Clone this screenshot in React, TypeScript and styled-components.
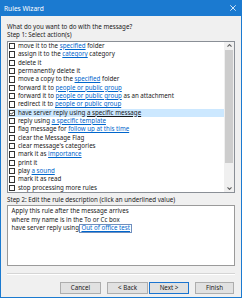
import React from 'react';
import styled, { createGlobalStyle } from 'styled-components';

const GlobalStyle = createGlobalStyle`
  html, body {
    margin: 0;
    padding: 0;
    background: #ffffff;
  }
  body {
    font-family: "Noto Sans", "Liberation Sans", sans-serif;
    color: #1a1a1a;
  }
`;

const Window = styled.div`
  width: 242px;
  height: 298px;
  box-sizing: border-box;
  border: 1px solid #1b7ad0;
  border-top: none;
  background: #f0f0f0;
  display: flex;
  flex-direction: column;
`;

const TitleBar = styled.div`
  height: 16px;
  margin: 0 -1px;
  padding: 0 6px 0 4px;
  background: #1b7ad0;
  color: #ffffff;
  display: flex;
  align-items: center;
  justify-content: space-between;
  font-size: 6.6px;
`;

const Body = styled.div`
  flex: 1;
  display: flex;
  flex-direction: column;
  padding: 6.8px 6px 0 6px;
  font-size: 6.2px;
  line-height: 8.35px;
`;

const Label = styled.div<{ $gap?: number }>`
  margin-top: ${(p) => p.$gap ?? 0}px;
  white-space: nowrap;
`;

const ListBox = styled.div`
  margin-top: 1.4px;
  height: 152.3px;
  box-sizing: border-box;
  border: 1px solid #8a8f96;
  background: #ffffff;
  display: flex;
`;

const Rows = styled.div`
  flex: 1;
  display: flex;
  flex-direction: column;
`;

const Row = styled.div<{ $selected?: boolean }>`
  height: 8.35px;
  display: flex;
  align-items: center;
  padding-left: 1px;
  white-space: nowrap;
  background: ${(p) => (p.$selected ? '#cce8ff' : 'transparent')};
`;

const Check = styled.span<{ $checked?: boolean }>`
  width: 6.3px;
  height: 6.3px;
  box-sizing: border-box;
  border: 1px solid #333333;
  background: #ffffff;
  margin-right: 2.6px;
  flex: none;
  display: flex;
  align-items: center;
  justify-content: center;
`;

const Link = styled.span<{ $dark?: boolean }>`
  color: ${(p) => (p.$dark ? '#1a1a1a' : '#0066cc')};
  text-decoration: underline;
  text-underline-offset: 1px;
`;

const ScrollBar = styled.div`
  width: 10px;
  background: #f0f0f0;
  display: flex;
  flex-direction: column;
`;

const ScrollArrow = styled.div`
  height: 8px;
  display: flex;
  align-items: center;
  justify-content: center;
`;

const Thumb = styled.div`
  height: 113px;
  margin: 0 1px;
  background: #cdcdcd;
`;

const Spacer = styled.div`
  flex: 1;
`;

const DescBox = styled.div`
  margin-top: 0.8px;
  height: 61px;
  box-sizing: border-box;
  border: 1px solid #9a9a9a;
  background: #ffffff;
  padding: 1.6px 3.5px;
`;

const DescLine = styled.div`
  white-space: nowrap;
  display: flex;
  align-items: center;
`;

const ValueLink = styled.span`
  color: #0066cc;
  text-decoration: underline;
  text-underline-offset: 1px;
  border: 1px solid #6f8fbf;
  line-height: 6.4px;
  padding: 0 1px;
  margin-left: 0.5px;
`;

const Separator = styled.div`
  margin-top: 6.7px;
  border-top: 1px solid #d5d5d5;
  border-bottom: 1px solid #ffffff;
`;

const ButtonRow = styled.div`
  margin-top: 7.5px;
  display: flex;
  justify-content: flex-end;
  padding-right: 1px;
`;

const Button = styled.div<{ $default?: boolean; $gap?: number; $width?: number }>`
  width: ${(p) => p.$width ?? 41}px;
  height: 11.5px;
  margin-left: ${(p) => p.$gap ?? 0}px;
  box-sizing: border-box;
  background: #e1e1e1;
  border: 1px solid ${(p) => (p.$default ? '#1b74cf' : '#adadad')};
  display: flex;
  align-items: center;
  justify-content: center;
  font-size: 6.2px;
`;

const Chevron = ({ up }: { up?: boolean }) => (
  <svg width="5" height="3" viewBox="0 0 5 3">
    <path
      d={up ? 'M0.5 2.6 L2.5 0.6 L4.5 2.6' : 'M0.5 0.4 L2.5 2.4 L4.5 0.4'}
      stroke="#606060"
      strokeWidth="1.1"
      fill="none"
    />
  </svg>
);

type Part = string | { link: string };

const actions: Part[][] = [
  ['move it to the ', { link: 'specified' }, ' folder'],
  ['assign it to the ', { link: 'category' }, ' category'],
  ['delete it'],
  ['permanently delete it'],
  ['move a copy to the ', { link: 'specified' }, ' folder'],
  ['forward it to ', { link: 'people or public group' }],
  ['forward it to ', { link: 'people or public group' }, ' as an attachment'],
  ['redirect it to ', { link: 'people or public group' }],
  ['have server reply using ', { link: 'a specific message' }],
  ['reply using ', { link: 'a specific template' }],
  ['flag message for ', { link: 'follow up at this time' }],
  ['clear the Message Flag'],
  ["clear message's categories"],
  ['mark it as ', { link: 'importance' }],
  ['print it'],
  ['play ', { link: 'a sound' }],
  ['mark it as read'],
  ['stop processing more rules'],
];

const SELECTED = 8;

function App() {
  return (
    <>
      <GlobalStyle />
      <Window>
        <TitleBar>
          <span>Rules Wizard</span>
          <svg width="6" height="6" viewBox="0 0 6 6">
            <path d="M0.3 0.3 L5.7 5.7 M5.7 0.3 L0.3 5.7" stroke="#ffffff" strokeWidth="0.8" />
          </svg>
        </TitleBar>
        <Body>
          <Label>What do you want to do with the message?</Label>
          <Label>Step 1: Select action(s)</Label>
          <ListBox>
            <Rows>
              {actions.map((parts, i) => (
                <Row key={i} $selected={i === SELECTED}>
                  <Check $checked={i === SELECTED}>
                    {i === SELECTED && (
                      <svg width="5" height="4" viewBox="0 0 5 4">
                        <path d="M0.4 2 L1.8 3.4 L4.6 0.4" stroke="#111" strokeWidth="1" fill="none" />
                      </svg>
                    )}
                  </Check>
                  <span>
                    {parts.map((p, j) =>
                      typeof p === 'string' ? (
                        <React.Fragment key={j}>{p}</React.Fragment>
                      ) : (
                        <Link key={j} $dark={i === SELECTED}>
                          {p.link}
                        </Link>
                      )
                    )}
                  </span>
                </Row>
              ))}
            </Rows>
            <ScrollBar>
              <ScrollArrow>
                <Chevron up />
              </ScrollArrow>
              <Thumb />
              <Spacer />
              <ScrollArrow>
                <Chevron />
              </ScrollArrow>
            </ScrollBar>
          </ListBox>
          <Label $gap={2.5}>Step 2: Edit the rule description (click an underlined value)</Label>
          <DescBox>
            <DescLine>Apply this rule after the message arrives</DescLine>
            <DescLine>where my name is in the To or Cc box</DescLine>
            <DescLine>
              have server reply using<ValueLink>Out of office test</ValueLink>
            </DescLine>
          </DescBox>
          <Separator />
          <ButtonRow>
            <Button>Cancel</Button>
            <Button $gap={6}>&lt; Back</Button>
            <Button $gap={1} $width={40} $default>
              Next &gt;
            </Button>
            <Button $gap={6} $width={39}>
              Finish
            </Button>
          </ButtonRow>
        </Body>
      </Window>
    </>
  );
}

export default App;
